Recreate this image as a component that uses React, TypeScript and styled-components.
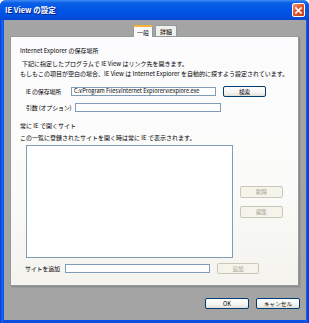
import React from 'react';
import styled, { createGlobalStyle } from 'styled-components';

const GlobalStyle = createGlobalStyle`
  html, body {
    margin: 0;
    padding: 0;
    width: 309px;
    height: 323px;
    overflow: hidden;
  }
  body {
    font-family: "Noto Sans CJK JP", "Liberation Sans", sans-serif;
    font-size: 6px;
    color: #000;
  }
`;

const Frame = styled.div`
  width: 309px;
  height: 323px;
  box-sizing: border-box;
  display: flex;
  flex-direction: column;
  background: linear-gradient(90deg, #0831d9 0, #166aee 2px, #0a4ee4 4px, #0a4ee4 304px, #1a5ee9 306px, #0831d9 309px);
  border-radius: 6px 6px 0 0;
`;

const TitleBar = styled.div`
  height: 20px;
  flex: none;
  display: flex;
  align-items: center;
  justify-content: space-between;
  padding: 0 4px 0 5px;
  background: linear-gradient(180deg, #3f8cf3 0, #0a5fe8 3px, #0155e5 10px, #0150e0 16px, #0147d0 20px);
  border-radius: 6px 6px 0 0;
`;

const Title = styled.div`
  color: #fff;
  font-weight: bold;
  font-size: 7.5px;
  line-height: 10px;
  text-shadow: 1px 1px 0 #0a1e8c;
`;

const CloseButton = styled.div`
  width: 13px;
  height: 14px;
  box-sizing: border-box;
  border: 1px solid #fff;
  border-radius: 2px;
  background: linear-gradient(135deg, #f09a7c 0, #e2582f 45%, #c83d14 100%);
  display: flex;
  align-items: center;
  justify-content: center;
`;

const Client = styled.div`
  flex: 1;
  margin: 0 3px 3px 4px;
  background: #a4a4a4;
  display: flex;
  flex-direction: column;
`;

const TabStrip = styled.div`
  display: flex;
  align-items: flex-end;
  height: 16px;
  padding-left: 129px;
  gap: 2px;
`;

const Tab = styled.div<{ $active?: boolean }>`
  box-sizing: border-box;
  height: ${(p) => (p.$active ? 12 : 11)}px;
  width: ${(p) => (p.$active ? 20 : 22)}px;
  display: flex;
  align-items: center;
  justify-content: center;
  background: ${(p) => (p.$active ? '#fcfcfe' : '#f1f0ea')};
  border: 1px solid #919b9c;
  border-bottom: none;
  border-top: ${(p) => (p.$active ? '2px solid #f6b436' : '1px solid #919b9c')};
  border-radius: 2px 2px 0 0;
  margin-bottom: ${(p) => (p.$active ? -1 : 0)}px;
  position: relative;
  z-index: ${(p) => (p.$active ? 2 : 1)};
`;

const Panel = styled.div`
  margin-left: 6px;
  width: 289px;
  height: 250px;
  box-sizing: border-box;
  border: 1px solid #919b9c;
  background: linear-gradient(180deg, #fcfcfe 0, #fbfbf9 60%, #f4f3ee 100%);
  box-shadow: 1px 1px 0 #8b8b8b, 2px 2px 0 #989898;
  padding: 8px 0 0 9px;
  display: flex;
  flex-direction: column;
`;

const Heading = styled.div<{ $top: number }>`
  line-height: 10px;
  height: 10px;
  margin-top: ${(p) => p.$top}px;
  white-space: nowrap;
`;

const Desc = styled.div<{ $indent?: number; $top?: number }>`
  line-height: 10px;
  height: 10px;
  padding-left: ${(p) => p.$indent ?? 0}px;
  margin-top: ${(p) => p.$top ?? 0}px;
  white-space: nowrap;
`;

const FieldRow = styled.div<{ $top: number; $indent: number }>`
  display: flex;
  align-items: center;
  height: 11px;
  margin-top: ${(p) => p.$top}px;
  padding-left: ${(p) => p.$indent}px;
`;

const Label = styled.div<{ $w: number }>`
  width: ${(p) => p.$w}px;
  flex: none;
  white-space: nowrap;
  line-height: 10px;
  letter-spacing: -0.2px;
`;

const TextInput = styled.div<{ $w: number }>`
  width: ${(p) => p.$w}px;
  height: 9px;
  box-sizing: border-box;
  flex: none;
  border: 1px solid #7f9db9;
  background: #fff;
  font-size: 5.6px;
  line-height: 7px;
  padding-left: 2px;
  white-space: nowrap;
  overflow: hidden;
`;

const Button = styled.div<{ $w: number; $h?: number; $disabled?: boolean; $gap?: number }>`
  width: ${(p) => p.$w}px;
  height: ${(p) => p.$h ?? 11}px;
  margin-left: ${(p) => p.$gap ?? 0}px;
  box-sizing: border-box;
  flex: none;
  display: flex;
  align-items: center;
  justify-content: center;
  font-size: 5.6px;
  border: 1px solid ${(p) => (p.$disabled ? '#c9c7ba' : '#003c74')};
  border-radius: 2px;
  color: ${(p) => (p.$disabled ? '#a19f94' : '#000')};
  background: ${(p) =>
    p.$disabled ? '#f5f4ea' : 'linear-gradient(180deg, #ffffff 0, #f4f4f0 60%, #e3e0d6 100%)'};
`;

const ListArea = styled.div`
  display: flex;
  margin-top: 2px;
  padding-left: 6px;
  height: 113px;
`;

const ListBox = styled.div`
  width: 207px;
  height: 113px;
  box-sizing: border-box;
  border: 1px solid #7f9db9;
  background: #fff;
`;

const SideButtons = styled.div`
  display: flex;
  flex-direction: column;
  gap: 8px;
  padding-top: 41px;
  margin-left: 7px;
`;

const Footer = styled.div`
  display: flex;
  justify-content: flex-end;
  gap: 7px;
  padding: 12px 6px 0 0;
`;

const XIcon = () => (
  <svg width="7" height="7" viewBox="0 0 7 7">
    <path d="M1 1 L6 6 M6 1 L1 6" stroke="#fff" strokeWidth="1.6" strokeLinecap="square" />
  </svg>
);

const App = () => (
  <>
    <GlobalStyle />
    <Frame>
      <TitleBar>
        <Title>IE View の設定</Title>
        <CloseButton>
          <XIcon />
        </CloseButton>
      </TitleBar>
      <Client>
        <TabStrip>
          <Tab $active>一般</Tab>
          <Tab>詳細</Tab>
        </TabStrip>
        <Panel>
          <Heading $top={1}>Internet Explorer の保存場所</Heading>
          <Desc $indent={2} $top={3}>下記に指定したプログラムで IE View はリンク先を開きます。</Desc>
          <Desc>もしもこの項目が空白の場合、IE View は Internet Explorer を自動的に探すよう設定されています。</Desc>
          <FieldRow $top={7} $indent={6}>
            <Label $w={45}>IE の保存場所</Label>
            <TextInput $w={145}>C:¥Program Files¥Internet Explorer¥iexplore.exe</TextInput>
            <Button $w={43} $gap={7}>検索</Button>
          </FieldRow>
          <FieldRow $top={5} $indent={6}>
            <Label $w={49}>引数 (オプション)</Label>
            <TextInput $w={146} />
          </FieldRow>
          <Heading $top={8}>常に IE で開くサイト</Heading>
          <Desc $top={2}>この一覧に登録されたサイトを開く時は常に IE で表示されます。</Desc>
          <ListArea>
            <ListBox />
            <SideButtons>
              <Button $w={43} $h={12} $disabled>削除</Button>
              <Button $w={43} $h={12} $disabled>編集</Button>
            </SideButtons>
          </ListArea>
          <FieldRow $top={5} $indent={5}>
            <Label $w={40}>サイトを追加</Label>
            <TextInput $w={145} />
            <Button $w={42} $gap={7} $disabled>追加</Button>
          </FieldRow>
        </Panel>
        <Footer>
          <Button $w={44}>OK</Button>
          <Button $w={44}>キャンセル</Button>
        </Footer>
      </Client>
    </Frame>
  </>
);

export default App;
